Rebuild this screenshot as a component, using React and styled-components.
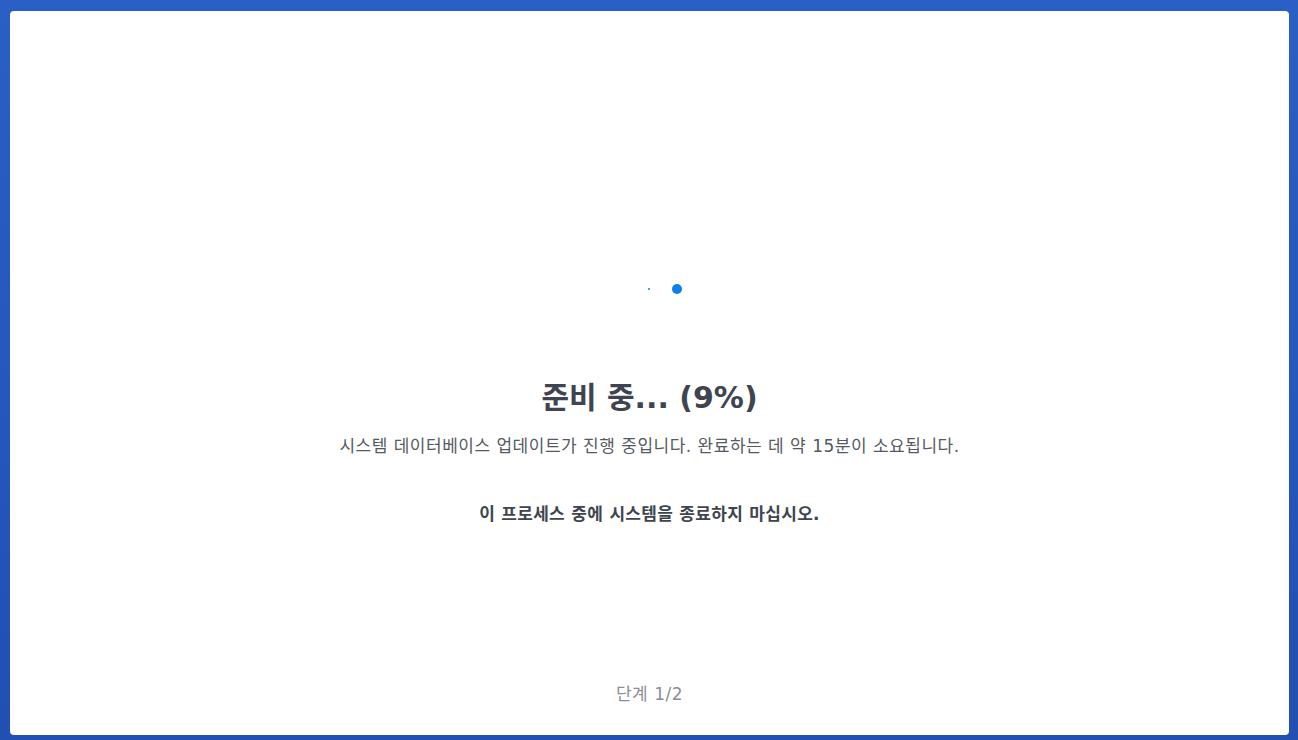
import React from 'react';
import styled, { createGlobalStyle } from 'styled-components';

const GlobalStyle = createGlobalStyle`
    html, body {
        margin: 0;
        padding: 0;
    }
    body {
        font-family: "DejaVu Sans", "Noto Sans CJK KR", sans-serif;
        background: linear-gradient(180deg, #2a5fc6 0%, #2556bd 60%, #214fb2 100%);
        min-height: 740px;
    }
`;

const Frame = styled.div`
    padding: 11px 9px 5px 10px;
    height: 740px;
    box-sizing: border-box;
`;

const Card = styled.div`
    background: #ffffff;
    border-radius: 4px;
    height: 724px;
    display: flex;
    flex-direction: column;
    align-items: center;
    padding-bottom: 30px;
    box-sizing: border-box;
`;

const Spinner = styled.div`
    margin-top: 258px;
    height: 40px;
    display: flex;
    align-items: center;
    justify-content: center;
    gap: 22px;
    padding-left: 31px;
`;

const Dot = styled.span`
    display: block;
    width: ${p => p.size}px;
    height: ${p => p.size}px;
    border-radius: 50%;
    background: #0a7ff0;
`;

const Title = styled.h1`
    margin: 72px 0 0;
    font-size: 30px;
    line-height: 34px;
    font-weight: bold;
    color: #3e4550;
`;

const Message = styled.p`
    margin: ${p => p.gap}px 0 0;
    font-size: 17px;
    line-height: 22px;
    letter-spacing: ${p => (p.strong ? 0.3 : 0.5)}px;
    font-weight: ${p => (p.strong ? 'bold' : 'normal')};
    color: ${p => (p.strong ? '#3e4550' : '#555a62')};
`;

const Step = styled.div`
    margin-top: auto;
    font-size: 17px;
    line-height: 22px;
    letter-spacing: 0.5px;
    color: #8a8f96;
`;

export default function App() {
    return (
        <>
            <GlobalStyle />
            <Frame>
                <Card>
                    <Spinner>
                        <Dot size={2} />
                        <Dot size={10} />
                    </Spinner>
                    <Title>준비 중... (9%)</Title>
                    <Message gap={20}>
                        시스템 데이터베이스 업데이트가 진행 중입니다. 완료하는 데 약 15분이 소요됩니다.
                    </Message>
                    <Message gap={46} strong>이 프로세스 중에 시스템을 종료하지 마십시오.</Message>
                    <Step>단계 1/2</Step>
                </Card>
            </Frame>
        </>
    );
}
